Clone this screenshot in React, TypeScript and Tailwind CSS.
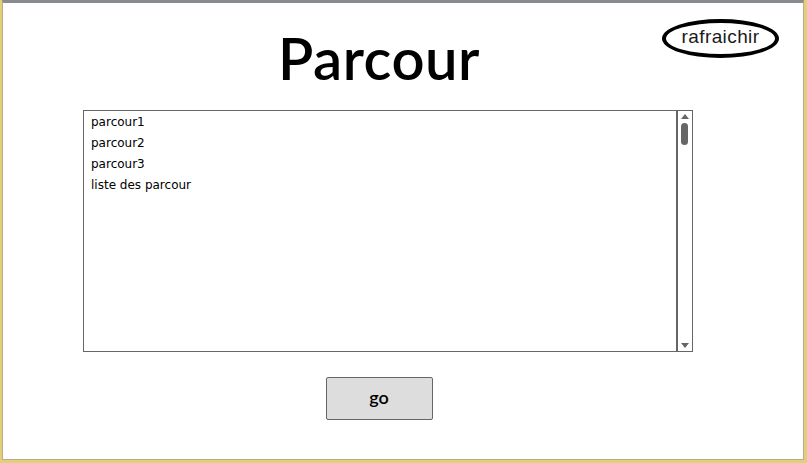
export default function App() {
  const items = ["parcour1", "parcour2", "parcour3", "liste des parcour"];

  return (
    <div className="w-[807px] h-[463px] bg-[#e3cf7a] pl-[2px] pr-[3px] pb-[3px] overflow-hidden">
      <div className="h-full flex flex-col bg-white border-t-[3px] border-t-[#888c90] border-l border-r border-b border-l-[#b7ad8a] border-r-[#b7ad8a] border-b-[#b7ad8a]">
        <div className="relative flex justify-center pt-[20px] pr-[48px] h-[107px]">
          <h1 className="text-[58px] leading-[70px] text-black font-['Lato',sans-serif] font-semibold tracking-[0.5px]">
            Parcour
          </h1>
          <button className="absolute right-[24px] top-[16px] w-[117px] h-[39px] rounded-[50%] border-[4px] border-black bg-white flex items-center justify-center text-[19px] tracking-[0.4px] text-[#1a1a1a] font-['Liberation_Sans',sans-serif] pb-[2px]">
            rafraichir
          </button>
        </div>
        <div className="ml-[80px] w-[610px] h-[242px] border border-[#666] flex">
          <div className="flex-1 pl-[7px] pt-[2px] font-['DejaVu_Sans',sans-serif] text-[12px] text-black">
            {items.map((it) => (
              <div key={it} className="h-[21px] leading-[19px]">
                {it}
              </div>
            ))}
          </div>
          <div className="w-[16px] border-l-2 border-[#666] relative">
            <div className="absolute left-[3px] top-[3px] w-0 h-0 border-l-[4px] border-r-[4px] border-b-[5px] border-l-transparent border-r-transparent border-b-[#666]" />
            <div className="absolute left-[3px] top-[12px] w-[7px] h-[22px] rounded-full bg-[#666]" />
            <div className="absolute left-[3px] bottom-[3px] w-0 h-0 border-l-[4px] border-r-[4px] border-t-[5px] border-l-transparent border-r-transparent border-t-[#666]" />
          </div>
        </div>
        <div className="flex justify-center pt-[25px] pr-[48px]">
          <button className="w-[107px] h-[43px] bg-[#dddddd] border border-[#666] rounded-[2px] text-[18px] text-black font-['Lato',sans-serif] font-semibold pb-[2px]">
            go
          </button>
        </div>
      </div>
    </div>
  );
}
